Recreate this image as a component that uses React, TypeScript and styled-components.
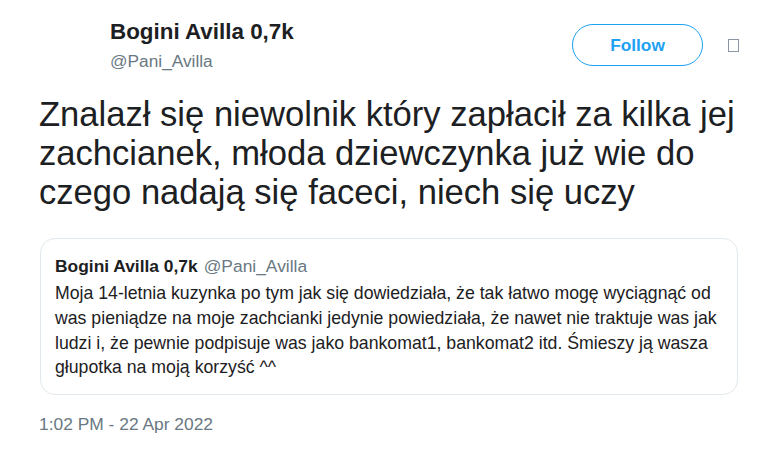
import React from "react";
import styled, { createGlobalStyle } from "styled-components";

const Global = createGlobalStyle`
  html, body { margin: 0; padding: 0; background: #ffffff; }
  body { font-family: "Liberation Sans", Arial, Helvetica, sans-serif; color: #1c2022; }
`;

const Page = styled.div`
  width: 772px;
  height: 451px;
  box-sizing: border-box;
  padding: 19px 33px 0 39px;
  background: #ffffff;
  overflow: hidden;
`;

const Header = styled.header`
  display: flex;
  align-items: flex-start;
`;

const AvatarSpace = styled.div`
  width: 71px;
  height: 52px;
  flex: none;
`;

const Identity = styled.div`
  flex: 1;
  display: flex;
  flex-direction: column;
  gap: 6px;
`;

const Name = styled.span<{ $size: number }>`
  font-weight: 700;
  font-size: ${(p) => p.$size}px;
  line-height: ${(p) => (p.$size > 20 ? 26 : 24)}px;
  color: #1c2022;
`;

const Handle = styled.span<{ $size: number }>`
  font-size: ${(p) => p.$size}px;
  line-height: 20px;
  color: #697882;
`;

const FollowButton = styled.button`
  margin-top: 5px;
  width: 131px;
  height: 42px;
  box-sizing: border-box;
  border: 1px solid #1da1f2;
  border-radius: 21px;
  background: #ffffff;
  color: #1da1f2;
  font-family: inherit;
  font-weight: 700;
  font-size: 17.3px;
  padding: 0;
  cursor: pointer;
`;

const Tofu = styled.span`
  margin: 20px 0 0 25px;
  width: 11px;
  height: 13px;
  box-sizing: border-box;
  border: 1px solid #8a96a3;
  flex: none;
`;

const Body = styled.p`
  margin: 24px 0 0;
  width: 700px;
  font-size: 34.6px;
  line-height: 38.8px;
  color: #1c2022;
`;

const Quote = styled.div`
  margin: 27px 0 0 1px;
  width: 698px;
  box-sizing: border-box;
  border: 1px solid #e1e8ed;
  border-radius: 15px;
  padding: 15px 14px 14px;
`;

const QuoteHeader = styled.div`
  display: flex;
  gap: 6px;
  align-items: baseline;
`;

const QuoteText = styled.p`
  margin: 3px 0 0;
  font-size: 17.7px;
  line-height: 24.6px;
  color: #1c2022;
`;

const Timestamp = styled.div`
  margin-top: 19px;
  font-size: 17.4px;
  line-height: 20px;
  color: #697882;
`;

export default function App() {
  return (
    <>
      <Global />
      <Page>
        <Header>
          <AvatarSpace />
          <Identity>
            <Name $size={22.4}>Bogini Avilla 0,7k</Name>
            <Handle $size={17.3}>@Pani_Avilla</Handle>
          </Identity>
          <FollowButton>Follow</FollowButton>
          <Tofu />
        </Header>
        <Body>
          Znalazł się niewolnik który zapłacił za kilka jej zachcianek, młoda
          dziewczynka już wie do czego nadają się faceci, niech się uczy
        </Body>
        <Quote>
          <QuoteHeader>
            <Name $size={17.4}>Bogini Avilla 0,7k</Name>
            <Handle $size={17.4}>@Pani_Avilla</Handle>
          </QuoteHeader>
          <QuoteText>
            Moja 14-letnia kuzynka po tym jak się dowiedziała, że tak łatwo
            mogę wyciągnąć od was pieniądze na moje zachcianki jedynie
            powiedziała, że nawet nie traktuje was jak ludzi i, że pewnie
            podpisuje was jako bankomat1, bankomat2 itd. Śmieszy ją wasza
            głupotka na moją korzyść ^^
          </QuoteText>
        </Quote>
        <Timestamp>1:02 PM - 22 Apr 2022</Timestamp>
      </Page>
    </>
  );
}
